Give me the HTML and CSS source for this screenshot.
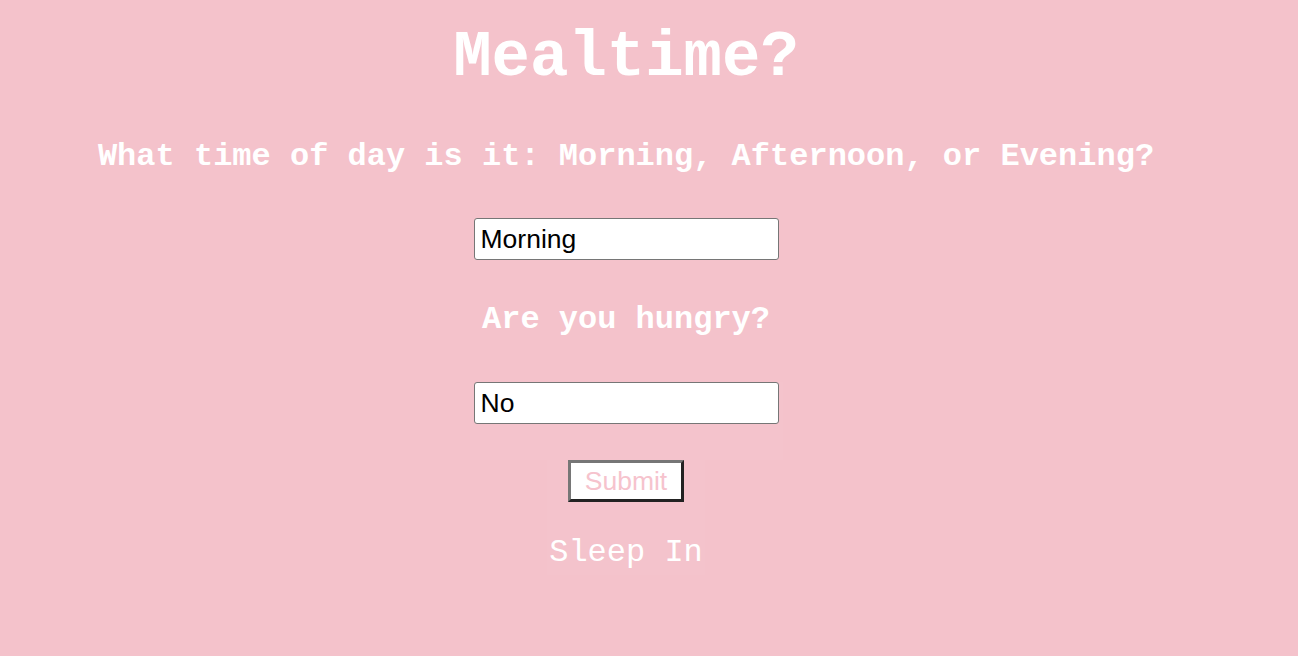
FILE: index.html
```html
<!DOCTYPE html>
<html lang="en">
<head>
<meta charset="utf-8">
<title>Mealtime?</title>
<link rel="stylesheet" href="styles.css">
</head>
<body>
<main class="page">
  <h1 class="title">Mealtime?</h1>
  <h2 class="question q-time">What time of day is it: Morning, Afternoon, or Evening?</h2>
  <input class="field f-time" type="text" value="Morning">
  <h2 class="question q-hungry">Are you hungry?</h2>
  <div class="field-wrap">
    <input class="field f-hungry" type="text" value="No">
  </div>
  <div class="result-wrap">
    <button class="submit" type="button">Submit</button>
    <p class="result">Sleep In</p>
  </div>
</main>
</body>
</html>
```
FILE: styles.css
```css
html, body {
  margin: 0;
  padding: 0;
  background: #f4c2cb;
}

body {
  font-family: "Liberation Mono", "Courier New", monospace;
  color: #ffffff;
}

.page {
  display: flex;
  flex-direction: column;
  align-items: center;
  padding: 22px 46px 0 0;
}

.title {
  margin: 0;
  font-size: 64px;
  font-weight: bold;
  line-height: 72px;
}

.question {
  margin: 0;
  font-size: 32px;
  font-weight: bold;
  line-height: 36px;
}

.q-time {
  margin-top: 45px;
}

.field {
  box-sizing: border-box;
  width: 305px;
  height: 42px;
  margin: 0;
  padding: 0 6px;
  border: 1px solid #767676;
  border-radius: 3px;
  background: #ffffff;
  color: #000000;
  font-family: "Liberation Sans", Arial, sans-serif;
  font-size: 26.5px;
  outline: none;
}

.f-time {
  margin-top: 43px;
}

.q-hungry {
  margin-top: 42px;
}

.field-wrap {
  margin-top: 44px;
  padding: 0 4px 36px;
  background: rgba(255, 255, 255, 0.025);
}

.result-wrap {
  display: flex;
  flex-direction: column;
  align-items: center;
  padding: 0 2px 4px;
  background: rgba(255, 255, 255, 0.025);
}

.submit {
  box-sizing: border-box;
  width: 116px;
  height: 42px;
  margin: 0;
  padding: 0;
  border-style: solid;
  border-width: 3px;
  border-color: #767676 #222222 #222222 #767676;
  background: #ffffff;
  color: #f6c3cd;
  font-family: "Liberation Sans", Arial, sans-serif;
  font-size: 26.5px;
  line-height: 34px;
}

.result {
  margin: 33px 0 0;
  font-size: 32px;
  line-height: 36px;
  font-weight: normal;
}
```
